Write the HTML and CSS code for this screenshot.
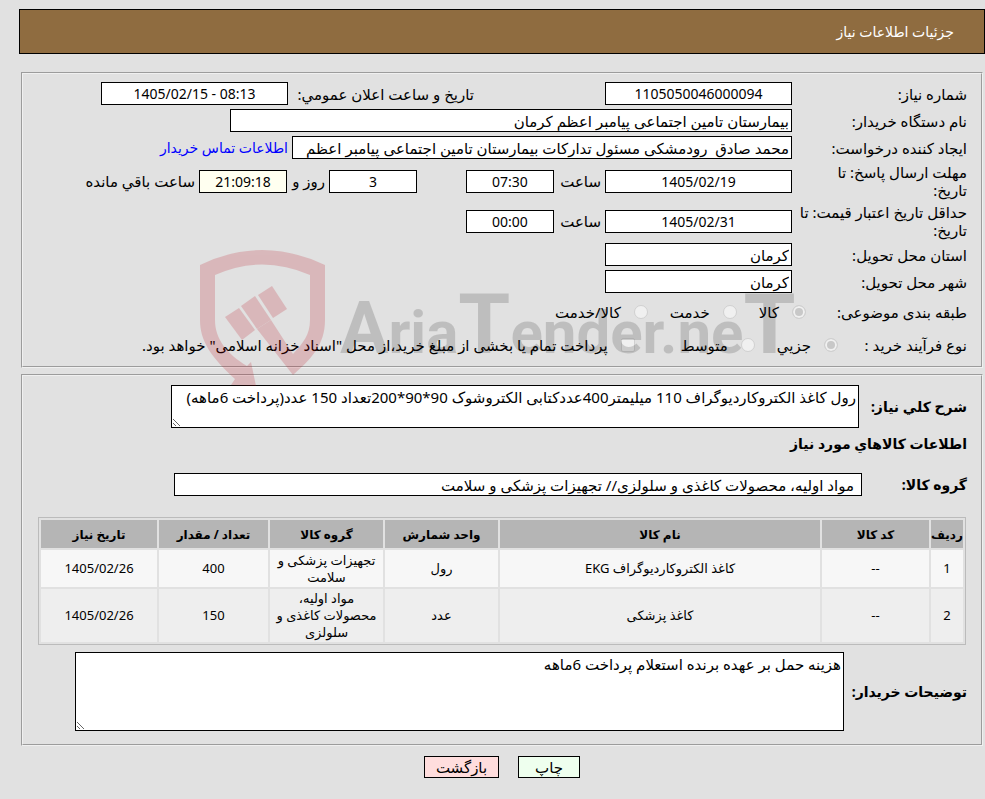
FILE: index.html
```html
<!DOCTYPE html>
<html lang="fa" dir="rtl">
<head>
  <meta charset="UTF-8" />
  <meta name="viewport" content="width=device-width, initial-scale=1.0"/>
  <title>جزئیات اطلاعات نیاز</title>
  <link rel="stylesheet" href="styles.css">
</head>
<body>

  <header>جزئیات اطلاعات نیاز</header>

  <form class="content">
    <!-- Need details -->
    <fieldset class="details">
      <div class="row">
        <label class="caption" for="needNo">شماره نیاز:</label>
        <input class="field medium number" type="text" id="needNo" value="1105050046000094" readonly>
        <label class="announce" for="announceDate">تاریخ و ساعت اعلان عمومي:</label>
        <input class="field medium number" type="text" id="announceDate" value="1405/02/15 - 08:13" readonly>
      </div>
      <div class="row">
        <label class="caption" for="buyer">نام دستگاه خریدار:</label>
        <input class="field wide" type="text" id="buyer" value="بیمارستان تامین اجتماعی پیامبر اعظم کرمان" readonly>
      </div>
      <div class="row">
        <label class="caption" for="creator">ایجاد کننده درخواست:</label>
        <input class="field creator" type="text" id="creator" value="محمد صادق  رودمشکی مسئول تدارکات بیمارستان تامین اجتماعی پیامبر اعظم" readonly>
        <a href="#">اطلاعات تماس خریدار</a>
      </div>
      <div class="row">
        <label class="caption" for="replyDate">مهلت ارسال پاسخ: تا<br>تاریخ:</label>
        <input class="field medium number" type="text" id="replyDate" value="1405/02/19" readonly>
        <label class="unit" for="replyTime">ساعت</label>
        <input class="field small number" type="text" id="replyTime" value="07:30" readonly>
        <input class="field small number days" type="text" id="daysLeft" value="3" readonly>
        <label class="unit short" for="daysLeft">روز و</label>
        <input class="field small number timer" type="text" id="timeLeft" value="21:09:18" readonly>
        <label for="timeLeft">ساعت باقي مانده</label>
      </div>
      <div class="row">
        <label class="caption" for="priceDate">حداقل تاریخ اعتبار قیمت: تا<br>تاریخ:</label>
        <input class="field medium number" type="text" id="priceDate" value="1405/02/31" readonly>
        <label class="unit" for="priceTime">ساعت</label>
        <input class="field small number" type="text" id="priceTime" value="00:00" readonly>
      </div>
      <div class="row">
        <label class="caption" for="province">استان محل تحویل:</label>
        <input class="field medium" type="text" id="province" value="کرمان" readonly>
      </div>
      <div class="row">
        <label class="caption" for="city">شهر محل تحویل:</label>
        <input class="field medium" type="text" id="city" value="کرمان" readonly>
      </div>
      <div class="row options">
        <span class="subject">طبقه بندی موضوعی:</span>
        <label class="option"><input type="radio" name="subject" checked disabled>کالا</label>
        <label class="option"><input type="radio" name="subject" disabled>خدمت</label>
        <label class="option"><input type="radio" name="subject" disabled>کالا/خدمت</label>
      </div>
      <div class="row options">
        <span class="process">نوع فرآیند خرید :</span>
        <label class="option"><input type="radio" name="process" checked disabled>جزیي</label>
        <label class="option"><input type="radio" name="process" disabled>متوسط</label>
        <label class="option treasury"><input type="checkbox" disabled>پرداخت تمام یا بخشی از مبلغ خرید،از محل "اسناد خزانه اسلامی" خواهد بود.</label>
      </div>
    </fieldset>

    <!-- Goods -->
    <fieldset class="goods">
      <div class="row">
        <label class="title" for="needDesc">شرح کلي نیاز:</label>
        <textarea class="desc" id="needDesc" readonly>رول کاغذ الکتروکاردیوگراف 110 میلیمتر400عددکتابی الکتروشوک 90*90*200تعداد 150 عدد(پرداخت 6ماهه)</textarea>
      </div>
      <h2>اطلاعات کالاهاي مورد نیاز</h2>
      <div class="row group">
        <label class="title" for="goodsGroup">گروه کالا:</label>
        <input class="field" type="text" id="goodsGroup" value="مواد اولیه، محصولات کاغذی و سلولزی// تجهیزات پزشکی و سلامت" readonly>
      </div>
      <table>
        <thead>
          <tr>
            <th class="col-row">ردیف</th>
            <th class="col-code">کد کالا</th>
            <th>نام کالا</th>
            <th class="col-unit">واحد شمارش</th>
            <th class="col-unit">گروه کالا</th>
            <th class="col-count">تعداد / مقدار</th>
            <th class="col-date">تاریخ نیاز</th>
          </tr>
        </thead>
        <tbody>
          <tr>
            <td>1</td>
            <td>--</td>
            <td>کاغذ الکتروکاردیوگراف EKG</td>
            <td>رول</td>
            <td>تجهیزات پزشکی و سلامت</td>
            <td>400</td>
            <td>1405/02/26</td>
          </tr>
          <tr>
            <td>2</td>
            <td>--</td>
            <td>کاغذ پزشکی</td>
            <td>عدد</td>
            <td>مواد اولیه، محصولات کاغذی و سلولزی</td>
            <td>150</td>
            <td>1405/02/26</td>
          </tr>
        </tbody>
      </table>
      <div class="row">
        <label class="title notes-title" for="buyerNotes">توضیحات خریدار:</label>
        <textarea class="notes" id="buyerNotes" readonly>هزینه حمل بر عهده برنده استعلام پرداخت 6ماهه</textarea>
      </div>
    </fieldset>

    <div class="buttons">
      <button type="button" class="print">چاپ</button>
      <button type="button" class="back">بازگشت</button>
    </div>

    <!-- Watermark -->
    <svg class="watermark" viewBox="0 0 604 140" aria-hidden="true">
      <g class="shield">
        <path d="M1 16Q63 -14 126 16V71C126 96 112 110 94 126L58 80L72 71L94 105C104 94 111 86 111 71V26Q63 5 16 26V71C16 90 28 105 48 117L52 113L57 137L32 136L36 130C12 108 1 92 1 71Z"/>
        <path d="M26 68L40 59L56 81L43 91Z"/>
        <path d="M42 57L56 47L72 71L58 80Z"/>
        <path d="M59 46L73 37L88 60L74 69Z"/>
      </g>
      <text class="wordmark" x="141" y="104" direction="ltr"><tspan class="cap">A</tspan>ria<tspan class="tall">T</tspan>ender.ne<tspan class="tall">T</tspan></text>
    </svg>
  </form>

</body>
</html>
```
FILE: styles.css
```css
* {
  box-sizing: border-box;
}

body {
  margin: 0;
  padding: 9px 0 20px;
  background-color: #e1e1e1;
  color: #000;
  font-family: "Noto Sans", "DejaVu Sans", sans-serif;
  font-size: 15px;
  line-height: 18px;
}

header {
  height: 45px;
  margin-left: 19px;
  padding: 0 30px;
  background-color: #8f6c40;
  border: 1px solid #000;
  color: #fff;
  font-size: 14px;
  line-height: 43px;
}

.content {
  position: relative;
  margin: 18px 2px 0 21px;
}

fieldset {
  margin: 0 0 6px;
  padding: 8px 14px 3px;
  border: 2px groove #f0f0f0;
}

.row {
  display: flex;
  align-items: center;
  gap: 4px;
  margin-bottom: 4px;
}

.caption {
  flex: 0 0 171px;
}

.field {
  height: 23px;
  padding: 0 2px;
  background-color: #fff;
  border: 1px solid #000;
  color: #000;
  font-family: inherit;
  font-size: 15px;
}

.number {
  font-size: 14px;
  text-align: center;
  direction: ltr;
}

.medium {
  width: 187px;
}

.small {
  width: 88px;
}

.wide {
  width: 562px;
}

.creator {
  width: 500px;
}

.announce {
  width: 182px;
  margin-right: 127px;
  white-space: nowrap;
}

.unit {
  width: 43px;
}

.unit.short {
  width: 34px;
  white-space: nowrap;
}

.days {
  margin-right: 45px;
}

.timer {
  background-color: #fffff0;
}

a {
  color: #0000ff;
  font-size: 14px;
  text-decoration: none;
}

/* Radio and check box rows */
.options {
  height: 29px;
  gap: 22px;
}

.subject {
  width: 139px;
  white-space: nowrap;
}

.process {
  width: 107px;
  white-space: nowrap;
}

.option {
  display: flex;
  align-items: center;
  gap: 13px;
  white-space: nowrap;
}

.treasury {
  margin-right: 24px;
}

.option input {
  appearance: none;
  width: 14px;
  height: 14px;
  margin: 0;
  background-color: #f0f0f0;
  border: 1px solid #d0d0d0;
  border-radius: 50%;
}

.option input[type="checkbox"] {
  border-radius: 2px;
}

.option input:checked {
  background-color: #c8c8c8;
  box-shadow: inset 0 0 0 2px #f0f0f0;
}

/* Goods section */
.title {
  width: 104px;
  font-size: 14px;
  font-weight: bold;
  white-space: nowrap;
}

.notes-title {
  width: 119px;
}

.goods {
  padding: 9px 14px;
}

textarea {
  padding: 2px;
  background-color: #fff;
  border: 1px solid #000;
  color: #000;
  font-family: inherit;
  font-size: 15px;
  line-height: 18px;
}

.desc {
  width: 688px;
  height: 43px;
}

.notes {
  width: 769px;
  height: 79px;
}

h2 {
  margin: 7px 0 20px;
  font-size: 14px;
  line-height: 18px;
}

.group {
  margin-bottom: 21px;
}

.group .title {
  width: 101px;
}

.group .field {
  width: 688px;
  padding: 0 7px;
}

table {
  width: calc(100% - 2px);
  margin: 0 1px 7px 0;
  border: 1px solid #bbb;
  border-spacing: 2px;
  table-layout: fixed;
  font-size: 13px;
  line-height: 17px;
  text-align: center;
}

th {
  height: 28px;
  padding: 0;
  background-color: #b5b5b5;
  font-size: 12px;
}

td {
  height: 37px;
  padding: 1px 2px;
  background-color: #eee;
}

tbody tr:nth-child(odd) td {
  background-color: #f7f7f7;
}

.col-row {
  width: 32px;
}

.col-code {
  width: 107px;
}

.col-unit {
  width: 113px;
}

.col-count {
  width: 109px;
}

.col-date {
  width: 116px;
}

.buttons {
  display: flex;
  justify-content: center;
  gap: 19px;
  padding-top: 4px;
}

button {
  height: 22px;
  padding: 0;
  border: 1px solid #000;
  color: #000;
  font-family: inherit;
  font-size: 15px;
  line-height: 20px;
}

.print {
  width: 62px;
  background-color: #eeffee;
}

.back {
  width: 75px;
  background-color: #ffdddd;
}

.watermark {
  position: absolute;
  top: 177px;
  right: 180px;
  width: 604px;
  height: 140px;
  pointer-events: none;
}

.shield {
  fill: #b80010;
  opacity: 0.18;
}

.wordmark {
  fill: #000;
  opacity: 0.15;
  font-family: Roboto, "Liberation Sans", sans-serif;
  font-size: 60px;
  font-weight: bold;
}

.cap {
  font-size: 72px;
}

.tall {
  font-size: 84px;
}
```
